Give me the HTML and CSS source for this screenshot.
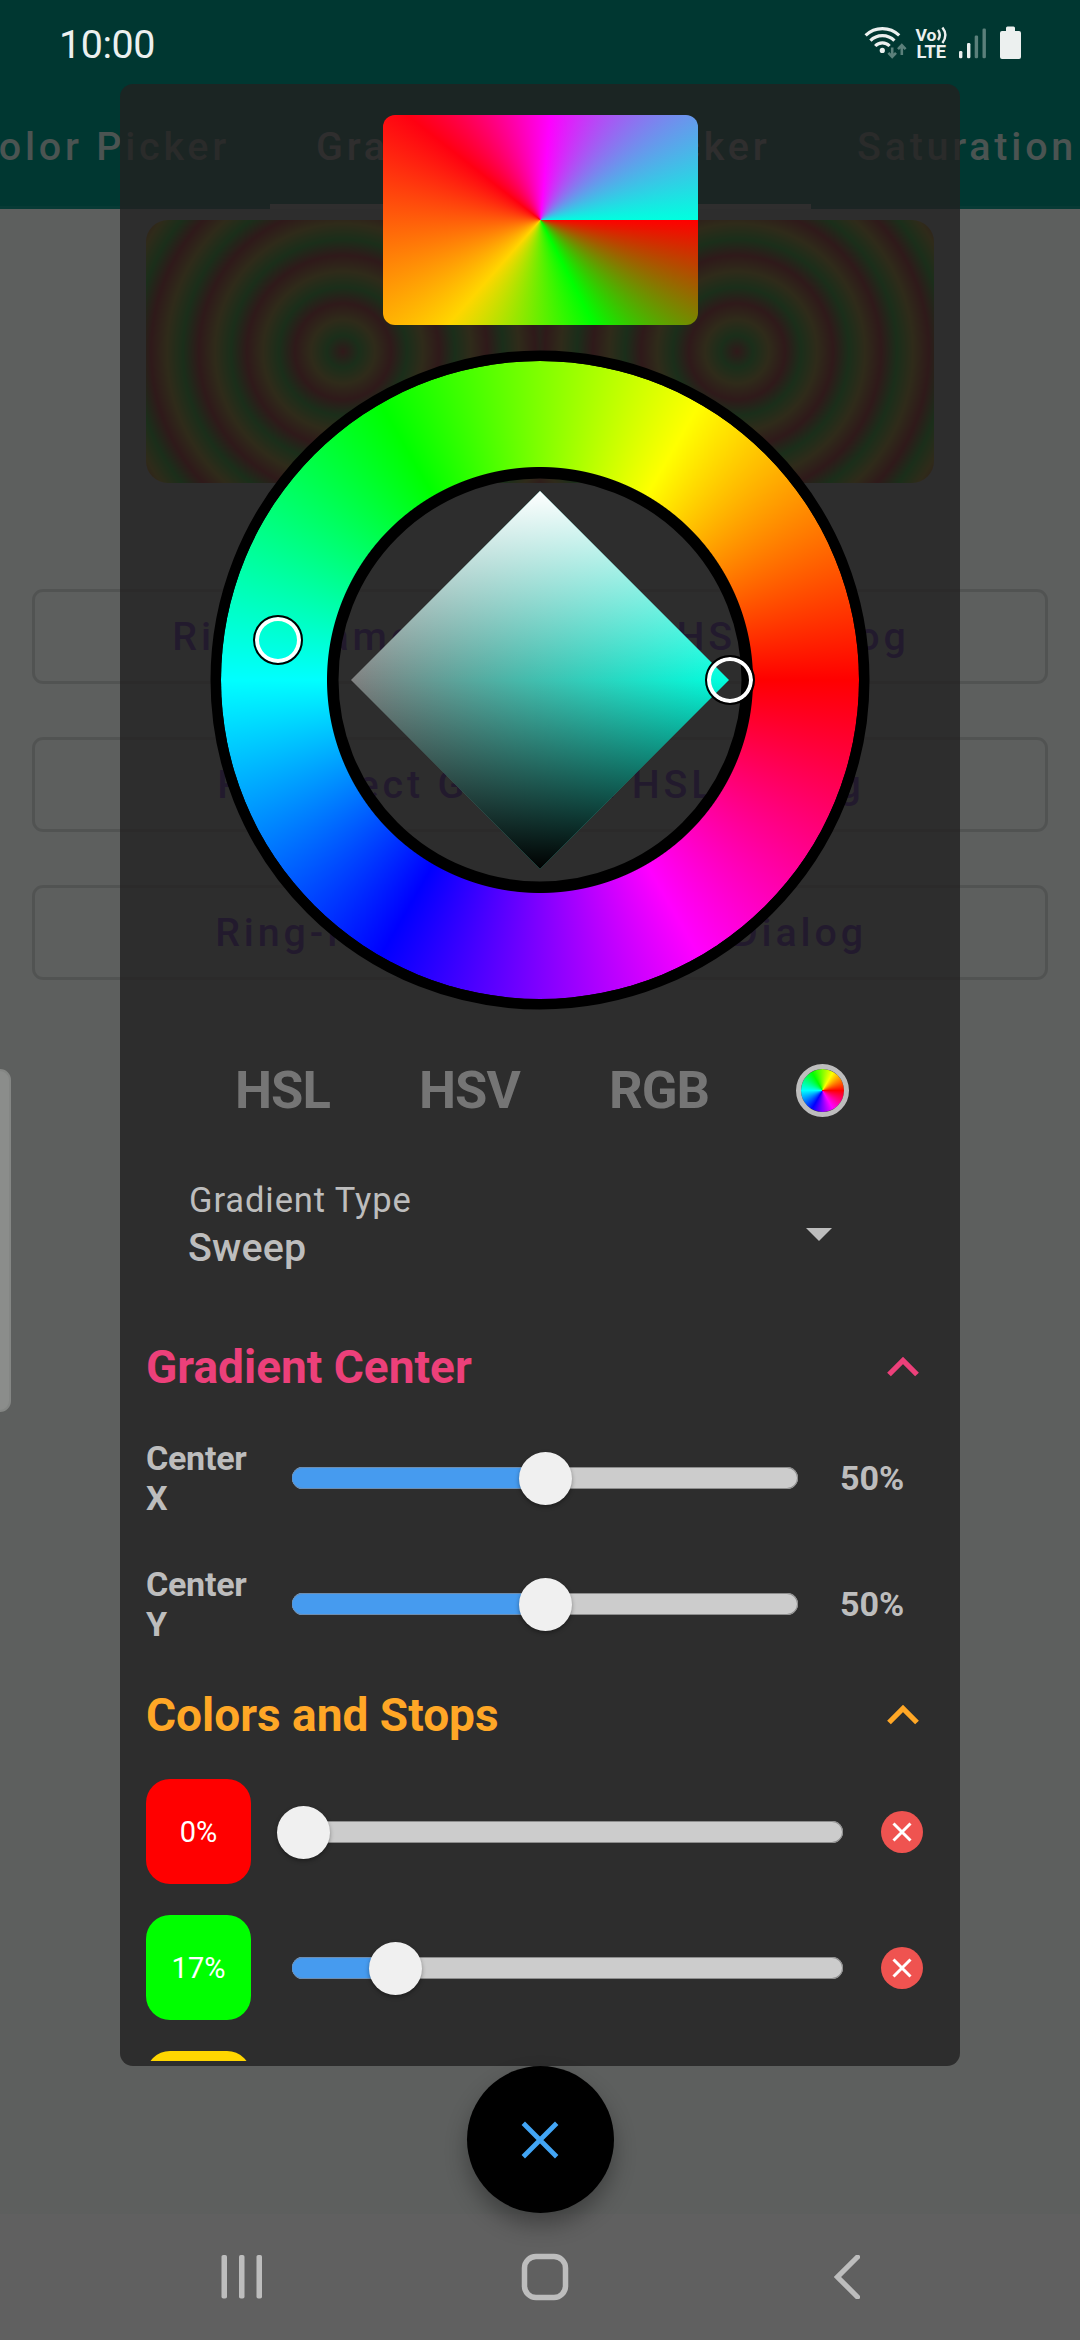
FILE: index.html
```html
<!DOCTYPE html>
<html lang="en">
<head>
<meta charset="utf-8">
<title>Gradient Picker</title>
<link rel="stylesheet" href="styles.css">
</head>
<body>
<div class="screen">
  <div class="app">
    <header class="app-bar">
      <nav class="page-tabs">
        <div class="page-tab">Color Picker</div>
        <div class="page-tab active">Gradient Color Picker</div>
        <div class="page-tab">Saturation Picker</div>
      </nav>
    </header>
    <main class="page">
      <div class="banner"><div class="rings"></div><div class="rings"></div></div>
      <div class="options">
        <div class="option">Ring-Diamond Gradient HSL Dialog</div>
        <div class="option">Ring-Rect Gradient HSL Dialog</div>
        <div class="option">Ring-Rect Gradient HSV Dialog</div>
      </div>
    </main>
    <div class="nav-bg"></div>
  </div>

  <div class="overlay">
    <div class="status">
      <div class="clock">10:00</div>
      <svg class="status-icons" width="164" height="44" viewBox="860 20 164 44">
        <g fill="none" stroke="#ecf0ef" stroke-width="3.2">
          <path d="M865.6 35.4a24 24 0 0 1 33.6 0"/>
          <path d="M870.4 40.7a16.8 16.8 0 0 1 24 0"/>
          <path d="M875.2 46a10 10 0 0 1 14.4 0"/>
        </g>
        <circle cx="882.3" cy="50.4" r="2.6" fill="#ecf0ef"/>
        <g fill="none" stroke="#5b807b" stroke-width="2.6">
          <path d="M892.2 47.5v9M888.4 52.8l3.8 4 3.8-4"/>
          <path d="M901.8 55v-9M898 49.2l3.8-4 3.8 4"/>
        </g>
        <text class="volte" x="915.4" y="40.5" textLength="21" lengthAdjust="spacingAndGlyphs">Vo</text>
        <text class="volte lte" x="916.6" y="58.3" textLength="29.5" lengthAdjust="spacingAndGlyphs">LTE</text>
        <g fill="none" stroke="#ecf0ef" stroke-width="2.4">
          <path d="M938 30q3.6 5 0 10"/>
          <path d="M942.4 27.500q6 7.500 0 15.500"/>
        </g>
        <g fill="#ecf0ef">
          <rect x="959" y="51" width="3.4" height="7.300" rx="1.300"/>
          <rect x="967" y="43" width="3.4" height="15.300" rx="1.300"/>
        </g>
        <g fill="#5b807b">
          <rect x="974.700" y="35.500" width="3.400" height="22.800" rx="1.300"/>
          <rect x="982.500" y="28.500" width="3.400" height="29.800" rx="1.300"/>
        </g>
        <path fill="#ecf0ef" d="M1006 31v-3q0-1.500 1.500-1.500h6q1.500 0 1.500 1.500v3h4q2 0 2 2v24q0 2-2 2h-17q-2 0-2-2v-24q0-2 2-2z"/>
      </svg>
    </div>

    <section class="dialog">
      <div class="preview"></div>
      <div class="wheel">
        <svg class="wheel-rims" viewBox="0 0 660 660">
          <circle cx="330" cy="330" r="323.500" />
          <circle cx="330" cy="330" r="207.500" />
        </svg>
        <div class="hue"></div>
        <div class="diamond"></div>
        <div class="handle hue-handle"></div>
        <div class="handle tone-handle"></div>
      </div>
      <div class="modes">
        <span>HSL</span><span>HSV</span><span>RGB</span><i class="mode-wheel"></i>
      </div>
      <div class="type">
        <div>
          <div class="type-label">Gradient Type</div>
          <div class="type-value">Sweep</div>
        </div>
        <svg width="26" height="13" viewBox="0 0 26 13"><path fill="#bdbdbd" d="M0 0h26L13 13z"/></svg>
      </div>

      <div class="section pink">
        <h2>Gradient Center</h2>
        <svg class="chev" width="32" height="20" viewBox="0 0 32 20"><path d="M2 17.500 16 3.500 30 17.500"/></svg>
      </div>
      <div class="center-row">
        <label>Center X</label>
        <div class="slider"><div class="fill" style="width:50%"></div><div class="thumb" style="left:50%"></div></div>
        <output>50%</output>
      </div>
      <div class="center-row">
        <label>Center Y</label>
        <div class="slider"><div class="fill" style="width:50%"></div><div class="thumb" style="left:50%"></div></div>
        <output>50%</output>
      </div>

      <div class="section orange">
        <h2>Colors and Stops</h2>
        <svg class="chev" width="32" height="20" viewBox="0 0 32 20"><path d="M2 17.500 16 3.500 30 17.500"/></svg>
      </div>
      <div class="stops">
        <div class="stop">
          <div class="swatch red">0%</div>
          <div class="slider"><div class="thumb" style="left:2%"></div></div>
          <svg class="remove" viewBox="0 0 42 42"><circle cx="21" cy="21" r="21"/><path d="M12.500 12.500l17 17M29.500 12.500l-17 17"/></svg>
        </div>
        <div class="stop">
          <div class="swatch green">17%</div>
          <div class="slider"><div class="fill" style="width:18.8%"></div><div class="thumb" style="left:18.8%"></div></div>
          <svg class="remove" viewBox="0 0 42 42"><circle cx="21" cy="21" r="21"/><path d="M12.500 12.500l17 17M29.500 12.500l-17 17"/></svg>
        </div>
        <div class="stop">
          <div class="swatch gold"></div>
        </div>
      </div>
    </section>

    <div class="fab">
      <svg width="38" height="38" viewBox="0 0 38 38"><path d="M2.300 2.300l33.400 33.400M35.700 2.300l-33.400 33.400"/></svg>
    </div>

    <div class="nav">
      <svg width="42" height="44" viewBox="0 0 42 44"><g fill="#bdbdbd"><rect x="0.500" y="0" width="5.500" height="43.500" rx="1.800"/><rect x="18" y="0" width="5.500" height="43.500" rx="1.800"/><rect x="35.500" y="0" width="5.500" height="43.500" rx="1.800"/></g></svg>
      <svg class="home" width="48" height="48" viewBox="0 0 48 48"><rect x="3.500" y="3.500" width="41" height="41" rx="11.500" fill="none" stroke="#bdbdbd" stroke-width="5.500"/></svg>
      <svg width="26" height="44" viewBox="0 0 26 44"><path d="M23.500 2 3.500 22l20 20" fill="none" stroke="#bdbdbd" stroke-width="5.200" stroke-linecap="round"/></svg>
    </div>
  </div>
  <div class="edge"></div>
</div>
</body>
</html>
```

FILE: styles.css
```css
* { box-sizing: border-box; }
body { margin: 0; font-family: Roboto, "Noto Sans", sans-serif; }
svg { display: block; flex: none; }

.screen { position: relative; width: 1080px; height: 2340px; overflow: hidden; }

/* page behind the dialog */
.app { position: relative; display: flex; flex-direction: column; height: 100%; background: #e8edeb; }
.app::after { content: ""; position: absolute; inset: 0; background: rgba(0, 0, 0, .6); }
.app-bar { height: 209px; padding-top: 84px; background: #00897b; border-bottom: 3px solid #129285; }
.page-tabs { display: flex; height: 125px; }
.page-tab {
  flex: none; display: flex; height: 125px; padding: 40px 0 0 46px; white-space: nowrap;
  font-size: 39.4px; font-weight: 500; line-height: 46px; letter-spacing: 3.8px;
  color: #bcd2cc; border-bottom: 5px solid transparent;
}
.page-tab:first-child { width: 270px; padding: 40px 40px 0 0; justify-content: flex-end; }
.page-tab.active { width: 541px; color: #fff; border-color: #fff; }
.page { flex: 1; padding: 11px 32px 0; }
.banner { display: flex; width: 788px; height: 263px; margin: 0 auto; border-radius: 22px; overflow: hidden; }
.rings {
  flex: 1;
  background: repeating-radial-gradient(circle at 50% 50%, #f00 0, #0f0 16px, #ffd600 32px, #f00 48px);
}
.options { display: flex; flex-direction: column; gap: 53px; margin-top: 106px; }
.option {
  height: 95px; padding-left: 2px; border: 3px solid rgba(0, 0, 0, .12); border-radius: 11px;
  text-align: center; font-size: 39.4px; font-weight: 500; line-height: 90px; letter-spacing: 3.85px;
  color: #6200ee; white-space: nowrap;
}
.nav-bg { height: 126px; background: #f0f0f0; }

/* foreground */
.overlay { position: absolute; inset: 0; display: flex; flex-direction: column; align-items: center; }
.status {
  display: flex; justify-content: space-between; align-items: flex-start;
  width: 100%; height: 84px; padding: 20px 56px 0 59px;
}
.clock { font-size: 39.400px; line-height: 49px; letter-spacing: -.4px; color: #ecf0ef; }
.volte { font-size: 17px; font-weight: 700; fill: #ecf0ef; }
.lte { font-size: 18px; }

.dialog {
  width: 840px; height: 1982px; padding: 31px 26px 5px; border-radius: 13px;
  background: rgba(34, 33, 33, .8); display: flex; flex-direction: column; overflow: hidden;
  color: #bdbdbd;
}
.dialog > * { flex: none; }
.preview {
  width: 315px; height: 210px; margin: 0 auto; border-radius: 12px;
  background: conic-gradient(from 90deg, #f00, #0f0 17.500%, #ffd600 36.500%, #ff0012 60.600%, #f0f 76.500%, #00ffdf);
}
.wheel { position: relative; width: 660px; height: 660px; margin: 25px auto 0; }
.wheel-rims { position: absolute; inset: 0; fill: none; stroke: #000; stroke-width: 12px; }
.hue {
  position: absolute; inset: 11px; border-radius: 50%;
  background: conic-gradient(from 90deg, #f00, #f0f, #00f, #0ff, #0f0, #ff0, #f00);
  -webkit-mask: radial-gradient(circle, transparent 212.500px, #000 213.500px);
  mask: radial-gradient(circle, transparent 212.500px, #000 213.500px);
}
.diamond {
  position: absolute; inset: 141px; clip-path: polygon(50% 0, 100% 50%, 50% 100%, 0 50%);
  background:
    linear-gradient(#fff, rgba(255, 255, 255, 0) 50%, rgba(0, 0, 0, 0) 50%, #000),
    linear-gradient(90deg, #808080, #00ffdf);
}
.handle {
  position: absolute; width: 50px; height: 50px; border-radius: 50%;
  border: 2px solid #000; box-shadow: inset 0 0 0 4px #fff;
}
.hue-handle { left: 42.500px; top: 265px; }
.tone-handle { left: 495px; top: 305px; }

.modes {
  display: flex; align-items: center; height: 62px; margin-top: 49px; padding-left: 89px;
  font-size: 52.500px; font-weight: 700; letter-spacing: -1px; color: #757575;
}
.modes span { width: 184px; }
.modes span:nth-child(2) { width: 190px; }
.modes span:nth-child(3) { width: 187px; }
.mode-wheel {
  width: 53px; height: 53px; border-radius: 50%; border: 5.500px solid #bdbdbd;
  background: conic-gradient(from 90deg, #f00, #f0f, #00f, #0ff, #0f0, #ff0, #f00) padding-box;
}
.type { display: flex; justify-content: space-between; align-items: center; margin: 56px 102px 0 42px; }
.type svg { margin-top: 19px; }
.type-label { margin-left: 1px; font-size: 34.500px; line-height: 46px; letter-spacing: .9px; }
.type-value { font-size: 39.400px; font-weight: 500; line-height: 50px; letter-spacing: .2px; }

.section { display: flex; align-items: center; justify-content: space-between; height: 60px; padding-right: 15px; }
.section h2 { margin: 0; font-size: 46px; font-weight: 700; line-height: 60px; }
.chev { fill: none; stroke: currentColor; stroke-width: 5.300px; }
.pink { margin-top: 64px; color: #ec407a; }
.orange { margin-top: 18px; color: #ffa726; }

.center-row { display: grid; grid-template-columns: 146px 506px 1fr; align-items: center; height: 126px; }
.pink + .center-row { margin-top: 18px; }
.center-row label { width: 110px; font-size: 34.100px; font-weight: 700; line-height: 40px; letter-spacing: -.3px; }
.center-row output { padding-left: 42px; font-size: 34.100px; font-weight: 700; }
.slider { position: relative; height: 22px; border-radius: 11px; background: #ccc; box-shadow: inset 0 0 0 1px #8d8d8d; }
.fill { height: 100%; border-radius: 11px 0 0 11px; background: #469bef; box-shadow: inset 0 1px #6d8db0, inset 0 -1px #6d8db0; }
.thumb {
  position: absolute; top: -15px; width: 53px; height: 53px; margin-left: -26.500px;
  border-radius: 50%; background: #f0f0f0; box-shadow: 0 2px 4px rgba(0, 0, 0, .35);
}

.stops { height: 282px; margin-top: 34px; }
.stop { display: grid; grid-template-columns: 105px 551px 42px; column-gap: 41px; align-items: center; height: 105px; margin-bottom: 31px; }
.stop:last-child { height: 10px; margin: 0; overflow: hidden; align-items: start; }
.stop .remove { margin-left: -3px; }
.swatch { height: 105px; border-radius: 24px; color: #fff; font-size: 29px; line-height: 107px; text-align: center; }
.red { background: #f00; }
.green { background: #0f0; }
.gold { background: #ffd600; }
.remove { width: 42px; height: 42px; fill: #ef5350; stroke: none; }
.remove path { stroke: #fff; stroke-width: 3px; }

.fab {
  display: flex; align-items: center; justify-content: center; flex: none;
  width: 147px; height: 147px; border-radius: 50%; background: #000;
  box-shadow: 0 12px 22px rgba(0, 0, 0, .32);
}
.fab path { stroke: #42a5f5; stroke-width: 4.800px; }
.nav {
  display: flex; justify-content: space-between; align-items: center;
  width: 100%; height: 126px; padding: 1px 220px 0 221px;
}
.home { margin-right: 7px; }

.edge { position: absolute; left: -11px; top: 1069px; width: 22px; height: 343px; border-radius: 11px; background: #8b8d8b; border: 2px solid #848684; }
```
